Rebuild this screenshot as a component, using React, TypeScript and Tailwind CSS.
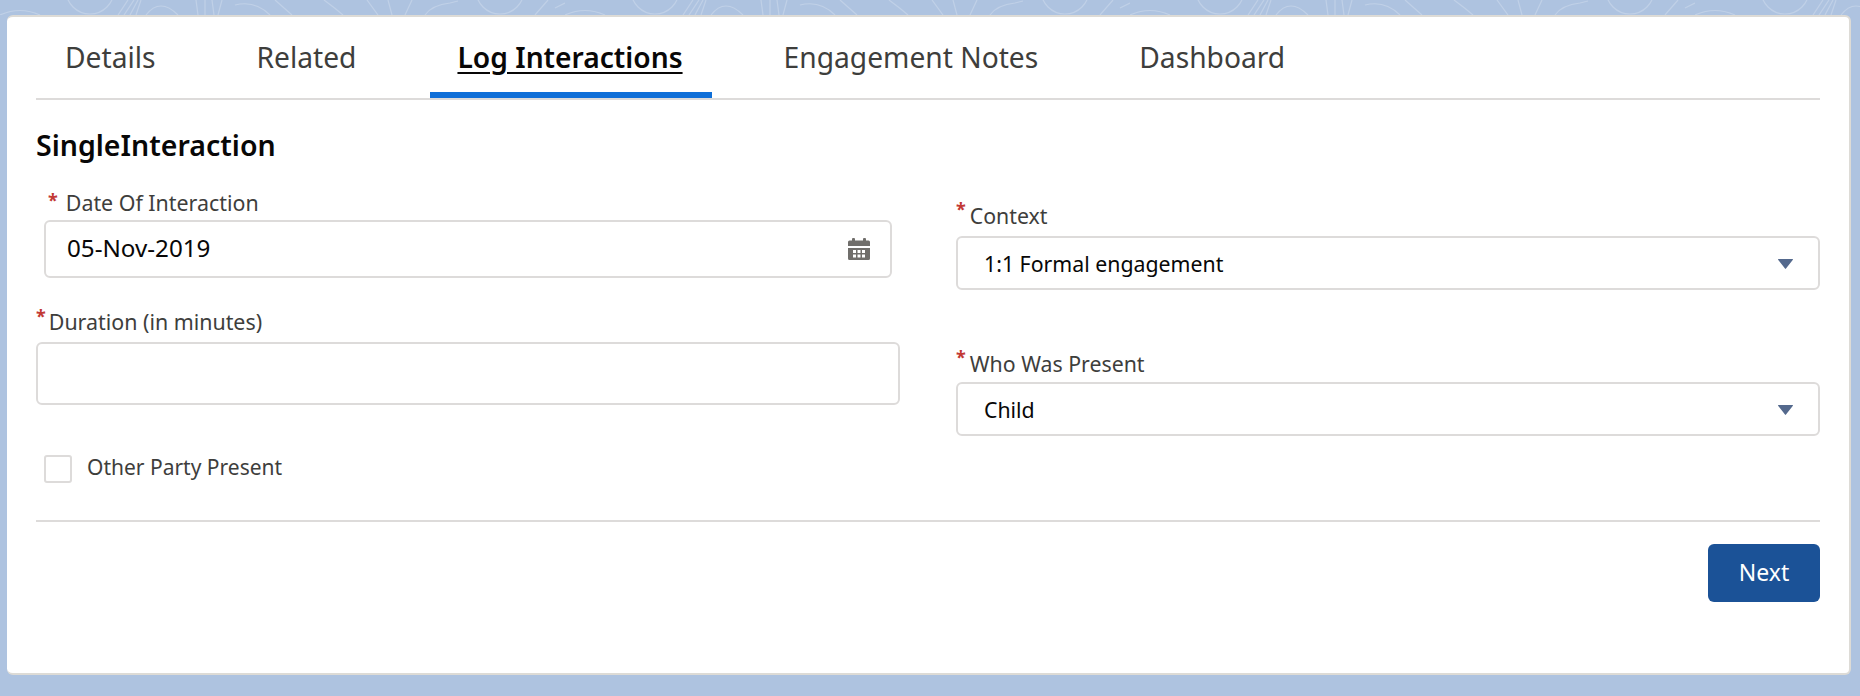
const tabs = [
  { label: "Details" },
  { label: "Related" },
  { label: "Log Interactions", active: true },
  { label: "Engagement Notes" },
  { label: "Dashboard" },
];

function Required({ className }: { className: string }) {
  return <span className={`text-[18px] leading-none font-bold text-[#c23934] ${className}`}>*</span>;
}

function CalendarIcon() {
  return (
    <svg width="22" height="22" viewBox="0 0 22 22" fill="#706e6b">
      <rect x="4" y="0" width="3" height="4" rx="1" />
      <rect x="15" y="0" width="3" height="4" rx="1" />
      <path d="M1.5 2.5h19A1.5 1.5 0 0 1 22 4v4H0V4a1.5 1.5 0 0 1 1.5-1.5z" />
      <path fillRule="evenodd" d="M0 10h22v10.5a1.5 1.5 0 0 1-1.5 1.5h-19A1.5 1.5 0 0 1 0 20.5zM5 12v3h3v-3zM9.5 12v3h3v-3zM14 12v3h3v-3zM5 16.500v3h3v-3zM9.500 16.500v3h3v-3zM14 16.500v3h3v-3z" />
    </svg>
  );
}

function SelectField({ label, value, tight }: { label: string; value: string; tight?: boolean }) {
  return (
    <div>
      <div className="flex h-[25px] items-center text-[21.300px] text-[#3e3e3c]">
        <Required className="-mt-[14px] mr-[4px]" />
        {label}
      </div>
      <div
        className={`${tight ? "mt-[6px]" : "mt-[8px]"} flex h-[54px] items-center justify-between rounded-[6px] border-2 border-[#dddbda] bg-white pt-[1px] pr-[25px] pl-[26px] text-[21.300px] text-[#080707]`}
      >
        {value}
        <svg width="15" height="10" viewBox="0 0 15 10">
          <path d="M0.5 0h14a.5.5 0 0 1 .4.8L8 9.6a.6.6 0 0 1-1 0L.1.8A.5.5 0 0 1 .5 0z" fill="#54698d" />
        </svg>
      </div>
    </div>
  );
}

// faint repeating swirl behind the top edge of the card
function BackgroundSwirl() {
  return (
    <svg className="absolute top-0 left-0" width="1860" height="15">
      <defs>
        <pattern id="swirl" width="565" height="15" patternUnits="userSpaceOnUse">
          <g fill="none" stroke="#fff" strokeOpacity="0.22" strokeWidth="1.2">
            <circle cx="90" cy="-10" r="24" />
            <circle cx="500" cy="-10" r="24" />
            <path d="M118 15 128 0M124 15 134 0M130 15 138 0M136 15 141 0" />
            <path d="M146 15Q160-3 178 15" />
            <path d="M196 0 198 15M205 0V15M212 0 214 15M222 0 218 15" />
            <path d="M235 5Q255 0 270 15M275 0 292 15" />
            <path d="M324 0Q335 8 343 15M367 0 378 15M388 0 392 15M412 0 405 15" />
            <path d="M425 15Q432 5 450 3L458 1M548 0 535 15M555 8 565 3" />
            <path d="M0 15Q20 6 40 15" />
          </g>
        </pattern>
      </defs>
      <rect width="1860" height="15" fill="url(#swirl)" />
    </svg>
  );
}

export default function App() {
  return (
    <div className="relative h-[696px] w-[1860px] overflow-hidden bg-[#aec3e0] pt-[15px] pr-[9px] pl-[7px] font-['Noto_Sans',sans-serif]">
      <BackgroundSwirl />
      <div className="relative h-[660px] rounded-[6px] border-t-2 border-r-2 border-b-2 border-[#dddbd6] bg-white px-[29px]">
        <nav className="flex h-[83px] gap-x-[43px] border-b-2 border-[#dddbda] text-[28.200px] text-[#3e3e3c]">
          {tabs.map((t) => (
            <span
              key={t.label}
              className={
                t.active
                  ? "ml-[2px] h-[81px] border-b-[6px] border-[#0f6fd8] pt-[19px] pr-[29px] pl-[27px] font-semibold text-[#080707] underline underline-offset-4"
                  : "px-[29px] pt-[19px]"
              }
            >
              {t.label}
            </span>
          ))}
        </nav>

        <h2 className="mt-[27px] text-[28.500px] leading-[36px] font-semibold text-[#080707]">SingleInteraction</h2>

        <div className="mt-[27px] grid grid-cols-[864px_864px] gap-x-[56px]">
          <div>
            <div className="flex h-[26px] items-center pl-[12px] text-[21.400px] text-[#3e3e3c]">
              <Required className="-mt-[6px] mr-[8px]" />
              Date Of Interaction
            </div>
            <div className="mt-[4px] ml-[8px] flex h-[58px] w-[848px] items-center justify-between rounded-[6px] border-2 border-[#dddbda] pr-[20px] pb-[1px] pl-[21px] text-[24.200px] text-[#080707]">
              05-Nov-2019
              <CalendarIcon />
            </div>
            <div className="mt-[32px] flex h-[25px] items-center text-[21.400px] text-[#3e3e3c]">
              <Required className="-mt-[14px] mr-[3px]" />
              Duration (in minutes)
            </div>
            <div className="mt-[7px] h-[63px] rounded-[6px] border-2 border-[#dddbda] bg-white" />
            <label className="mt-[50px] ml-[8px] flex items-center gap-[15px] text-[21px] text-[#3e3e3c]">
              <span className="h-[28px] w-[28px] rounded-[3px] border-2 border-[#dddbda]" />
              <span className="-mt-[3px]">Other Party Present</span>
            </label>
          </div>
          <div className="flex flex-col gap-[61px] pt-[13px]">
            <SelectField label="Context" value="1:1 Formal engagement" />
            <SelectField label="Who Was Present" value="Child" tight />
          </div>
        </div>

        <div className="mt-[36px] border-t-2 border-[#dddbda]" />
        <div className="mt-[22px] flex justify-end">
          <button className="h-[58px] w-[112px] rounded-[6px] bg-[#1b5297] text-[23px] text-white">Next</button>
        </div>
      </div>
    </div>
  );
}
